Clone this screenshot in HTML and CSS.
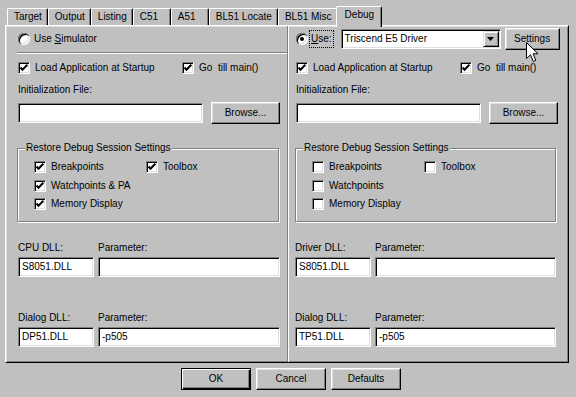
FILE: index.html
```html
<!DOCTYPE html>
<html lang="en">
<head>
  <meta charset="UTF-8">
  <title>Options for Target - Debug</title>
  <link rel="stylesheet" href="styles.css">
</head>
<body>

  <div class="tabs">
    <div class="tab">Target</div>
    <div class="tab">Output</div>
    <div class="tab">Listing</div>
    <div class="tab">C51</div>
    <div class="tab">A51</div>
    <div class="tab">BL51 Locate</div>
    <div class="tab">BL51 Misc</div>
    <div class="tab active">Debug</div>
  </div>

  <div class="panel">

    <!-- simulator side -->
    <div class="pane pane-left">
      <div class="head">
        <span class="radio"></span>
        <span class="head-label">Use <u>S</u>imulator</span>
      </div>
      <div class="rule"></div>

      <div class="checks">
        <div class="check-item wide"><span class="checkbox on"><svg width="10" height="10" viewBox="0 0 10 10"><path d="M1.5 4.5 L3.5 6.8 L8.3 1.8" fill="none" stroke="#000" stroke-width="2"/></svg></span>Load Application at Startup</div>
        <div class="check-item"><span class="checkbox on"><svg width="10" height="10" viewBox="0 0 10 10"><path d="M1.5 4.5 L3.5 6.8 L8.3 1.8" fill="none" stroke="#000" stroke-width="2"/></svg></span>Go&nbsp; till main()</div>
      </div>

      <div class="caption">Initialization File:</div>
      <div class="file-row">
        <div class="field file"></div>
        <div class="btn browse">Browse...</div>
      </div>

      <div class="group">
        <span class="group-title">Restore Debug Session Settings</span>
        <div class="group-grid">
          <div class="check-item"><span class="checkbox on"><svg width="10" height="10" viewBox="0 0 10 10"><path d="M1.5 4.5 L3.5 6.8 L8.3 1.8" fill="none" stroke="#000" stroke-width="2"/></svg></span>Breakpoints</div>
          <div class="check-item"><span class="checkbox on"><svg width="10" height="10" viewBox="0 0 10 10"><path d="M1.5 4.5 L3.5 6.8 L8.3 1.8" fill="none" stroke="#000" stroke-width="2"/></svg></span>Toolbox</div>
          <div class="check-item"><span class="checkbox on"><svg width="10" height="10" viewBox="0 0 10 10"><path d="M1.5 4.5 L3.5 6.8 L8.3 1.8" fill="none" stroke="#000" stroke-width="2"/></svg></span>Watchpoints &amp; PA</div>
          <div></div>
          <div class="check-item"><span class="checkbox on"><svg width="10" height="10" viewBox="0 0 10 10"><path d="M1.5 4.5 L3.5 6.8 L8.3 1.8" fill="none" stroke="#000" stroke-width="2"/></svg></span>Memory Display</div>
        </div>
      </div>

      <div class="dll dll-first">
        <div>CPU DLL:</div>
        <div>Parameter:</div>
        <div class="field">S8051.DLL</div>
        <div class="field"></div>
      </div>

      <div class="dll dll-second">
        <div>Dialog DLL:</div>
        <div>Parameter:</div>
        <div class="field">DP51.DLL</div>
        <div class="field">-p505</div>
      </div>
    </div>

    <!-- target driver side -->
    <div class="pane pane-right">
      <div class="head">
        <span class="radio on"></span>
        <span class="head-label focus"><u>U</u>se:</span>
        <div class="field combo">
          Triscend E5 Driver
          <span class="combo-btn"><svg width="7" height="4" viewBox="0 0 7 4"><path d="M0 0 H7 L3.5 4 Z" fill="#000"/></svg></span>
        </div>
        <div class="settings-wrap">
          <div class="btn settings">Settings</div>
          <svg class="cursor" width="13" height="21" viewBox="0 0 13 21"><path d="M0.5 0.5 V16.5 L4.5 12.8 L7.3 19.5 L9.8 18.4 L7.1 11.8 H12 Z" fill="#fff" stroke="#000" stroke-width="1"/></svg>
        </div>
      </div>
      <div class="rule"></div>

      <div class="checks">
        <div class="check-item wide"><span class="checkbox on"><svg width="10" height="10" viewBox="0 0 10 10"><path d="M1.5 4.5 L3.5 6.8 L8.3 1.8" fill="none" stroke="#000" stroke-width="2"/></svg></span>Load Application at Startup</div>
        <div class="check-item"><span class="checkbox on"><svg width="10" height="10" viewBox="0 0 10 10"><path d="M1.5 4.5 L3.5 6.8 L8.3 1.8" fill="none" stroke="#000" stroke-width="2"/></svg></span>Go&nbsp; till main()</div>
      </div>

      <div class="caption">Initialization File:</div>
      <div class="file-row">
        <div class="field file"></div>
        <div class="btn browse">Browse...</div>
      </div>

      <div class="group">
        <span class="group-title">Restore Debug Session Settings</span>
        <div class="group-grid">
          <div class="check-item"><span class="checkbox"></span>Breakpoints</div>
          <div class="check-item"><span class="checkbox"></span>Toolbox</div>
          <div class="check-item"><span class="checkbox"></span>Watchpoints</div>
          <div></div>
          <div class="check-item"><span class="checkbox"></span>Memory Display</div>
        </div>
      </div>

      <div class="dll dll-first">
        <div>Driver DLL:</div>
        <div>Parameter:</div>
        <div class="field">S8051.DLL</div>
        <div class="field"></div>
      </div>

      <div class="dll dll-second">
        <div>Dialog DLL:</div>
        <div>Parameter:</div>
        <div class="field">TP51.DLL</div>
        <div class="field">-p505</div>
      </div>
    </div>

  </div>

  <div class="footer">
    <div class="btn default">OK</div>
    <div class="btn">Cancel</div>
    <div class="btn">Defaults</div>
  </div>

</body>
</html>
```

FILE: styles.css
```css
* {
  box-sizing: border-box;
}
body {
  margin: 0;
  background: #c0c0c0;
  color: #000;
  font-family: "Liberation Sans", Arial, sans-serif;
  font-size: 10px;
  line-height: 12px;
  -webkit-user-select: none;
  user-select: none;
}

/* tab strip */
.tabs {
  display: flex;
  align-items: flex-end;
  height: 25px;
  padding-left: 7px;
}
.tab {
  height: 17px;
  min-width: 38px;
  padding: 2px 5px 0 6px;
  border: 1px solid #fff;
  border-right-color: #000;
  border-bottom: none;
  border-radius: 2px 2px 0 0;
  box-shadow: inset -1px 0 #808080;
  white-space: nowrap;
}
.tab.active {
  position: relative;
  z-index: 1;
  height: 21px;
  margin: 0 -2px -2px;
  padding: 2px 7px 0 8px;
  background: #c0c0c0;
}

/* page body */
.panel {
  display: flex;
  width: 564px;
  height: 338px;
  margin-left: 5px;
  border: 1px solid;
  border-color: #fff #000 #000 #fff;
  box-shadow: inset 1px 1px #dfdfdf, inset -1px -1px #808080;
}
.pane {
  padding-top: 3px;
}
.pane-left {
  width: 282px;
  padding-left: 12px;
  padding-right: 7px;
  border-right: 1px solid #808080;
}
.pane-right {
  flex: 1;
  padding-left: 7px;
  border-left: 1px solid #fff;
}

.head {
  display: flex;
  align-items: center;
  height: 20px;
}
.head-label {
  margin-left: 4px;
  white-space: nowrap;
}
.head-label.focus {
  margin-left: 2px;
  padding: 2px 1px;
  outline: 1px dotted #000;
  outline-offset: 0;
}
.rule {
  height: 2px;
  margin: 3px -7px 0 -1px;
  border-top: 1px solid #808080;
  border-bottom: 1px solid #fff;
}
.pane-right .rule {
  visibility: hidden;
}

.radio {
  position: relative;
  flex: none;
  width: 12px;
  height: 12px;
  border-radius: 50%;
  background: #fff;
  box-shadow: inset 1px 1px #808080, inset 2px 2px #000, inset -1px -1px #fff, inset -2px -2px #dfdfdf;
}
.radio.on::after {
  content: "";
  position: absolute;
  top: 4px;
  left: 4px;
  width: 4px;
  height: 4px;
  border-radius: 50%;
  background: #000;
}

.combo {
  position: relative;
  width: 160px;
  margin-left: 8px;
  white-space: nowrap;
}
.combo-btn {
  position: absolute;
  top: 1px;
  right: 1px;
  width: 16px;
  height: 16px;
  display: flex;
  align-items: center;
  justify-content: center;
  background: #c0c0c0;
  border: 1px solid;
  border-color: #dfdfdf #000 #000 #dfdfdf;
  box-shadow: inset 1px 1px #fff, inset -1px -1px #808080;
}
.settings-wrap {
  position: relative;
  margin-left: 4px;
}
.settings {
  width: 55px;
}
.cursor {
  position: absolute;
  top: 14px;
  left: 21px;
  z-index: 2;
}

/* checkboxes */
.checks {
  display: flex;
  margin-top: 8px;
  height: 12px;
}
.check-item {
  display: flex;
  align-items: center;
  white-space: nowrap;
}
.check-item.wide {
  width: 164px;
}
.checkbox {
  flex: none;
  width: 12px;
  height: 12px;
  margin-right: 5px;
  display: flex;
  align-items: center;
  justify-content: center;
  background: #fff;
  border: 1px solid;
  border-color: #808080 #fff #fff #808080;
  box-shadow: inset 1px 1px #000, inset -1px -1px #dfdfdf;
}

.caption {
  margin-top: 10px;
}
.file-row {
  display: flex;
  align-items: center;
  gap: 8px;
  margin-top: 6px;
  height: 22px;
}

/* sunken edit field */
.field {
  height: 20px;
  padding: 3px 3px 0;
  background: #fff;
  border: 1px solid;
  border-color: #808080 #fff #fff #808080;
  box-shadow: inset 1px 1px #000, inset -1px -1px #dfdfdf;
  white-space: nowrap;
}
.field.file {
  width: 185px;
}

/* raised push button */
.btn {
  height: 22px;
  display: flex;
  align-items: center;
  justify-content: center;
  border: 1px solid;
  border-color: #fff #000 #000 #fff;
  box-shadow: inset -1px -1px #808080, inset 1px 1px #dfdfdf;
}
.btn.browse {
  width: 69px;
}
.btn.default {
  border-color: #000;
  box-shadow: inset 1px 1px #fff, inset -1px -1px #000, inset -2px -2px #808080;
}

/* group box */
.group {
  position: relative;
  width: 262px;
  margin: 24px 0 0 -1px;
  padding: 9px 0 7px 16px;
  border: 1px solid #808080;
  box-shadow: 1px 1px #fff, inset 1px 1px #fff;
}
.pane-right .group {
  width: 261px;
}
.group-title {
  position: absolute;
  top: -7px;
  left: 7px;
  padding: 0 1px;
  background: #c0c0c0;
  white-space: nowrap;
}
.group-grid {
  display: grid;
  grid-template-columns: 112px auto;
  grid-auto-rows: 18.5px;
}

/* dll rows */
.dll {
  display: grid;
  grid-template-columns: 76px 182px;
  column-gap: 4px;
  row-gap: 3px;
}
.pane-right .dll {
  grid-template-columns: 76px 181px;
  margin-left: -1px;
}
.dll-first {
  margin-top: 20px;
}
.dll-second {
  margin-top: 35px;
}

.footer {
  display: flex;
  justify-content: center;
  gap: 5px;
  margin-top: 5px;
  padding-left: 6px;
}
.footer .btn {
  width: 70px;
}
```
